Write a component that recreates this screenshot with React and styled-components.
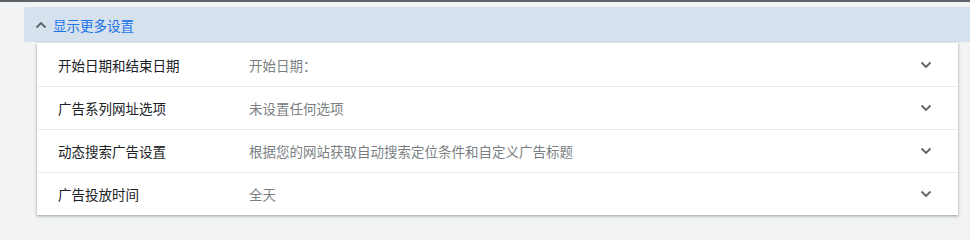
import React from 'react';
import styled, { createGlobalStyle } from 'styled-components';

const GlobalStyle = createGlobalStyle`
  body {
    margin: 0;
    background: #f1f3f4;
    font-family: "Noto Sans CJK SC", "Liberation Sans", sans-serif;
  }
`;

const Page = styled.div`
  border-top: 2px solid #5f6368;
  padding: 5px 0 0 24px;
  height: 231px;
  box-sizing: border-box;
`;

const Header = styled.div`
  display: flex;
  align-items: center;
  gap: 6px;
  height: 35px;
  padding-left: 11px;
  background: #d6e1ee;
  border-radius: 2px 0 0 0;
  color: #1a73e8;
  font-size: 13.5px;
`;

const Card = styled.div`
  margin: 1px 12px 0 13px;
  background: #fff;
  box-shadow: 0 1px 2px rgba(60, 64, 67, 0.3), 0 1px 3px 1px rgba(60, 64, 67, 0.15);
`;

const Row = styled.div`
  display: grid;
  grid-template-columns: 191px 1fr 38px;
  align-items: center;
  box-sizing: border-box;
  height: 43px;
  padding-left: 21px;
  border-top: ${(p) => (p.$first ? 'none' : '1px solid #ebebeb')};
  font-size: 13.5px;
`;

const Label = styled.span`
  color: #202124;
`;

const Value = styled.span`
  color: #7b7f83;
`;

const Chevron = ({ up }) => (
  <svg width="12" height="8" viewBox="0 0 12 8" style={{ display: 'block' }}>
    <path
      d={up ? 'M1.5 6.5 L6 2 L10.5 6.5' : 'M1.5 1.5 L6 6 L10.5 1.5'}
      fill="none"
      stroke="#5f6368"
      strokeWidth="1.8"
    />
  </svg>
);

const rows = [
  ['开始日期和结束日期', '开始日期：'],
  ['广告系列网址选项', '未设置任何选项'],
  ['动态搜索广告设置', '根据您的网站获取自动搜索定位条件和自定义广告标题'],
  ['广告投放时间', '全天'],
];

export default function App() {
  return (
    <>
      <GlobalStyle />
      <Page>
        <Header>
          <Chevron up />
          <span>显示更多设置</span>
        </Header>
        <Card>
          {rows.map(([label, value], i) => (
            <Row key={label} $first={i === 0}>
              <Label>{label}</Label>
              <Value>{value}</Value>
              <Chevron />
            </Row>
          ))}
        </Card>
      </Page>
    </>
  );
}
